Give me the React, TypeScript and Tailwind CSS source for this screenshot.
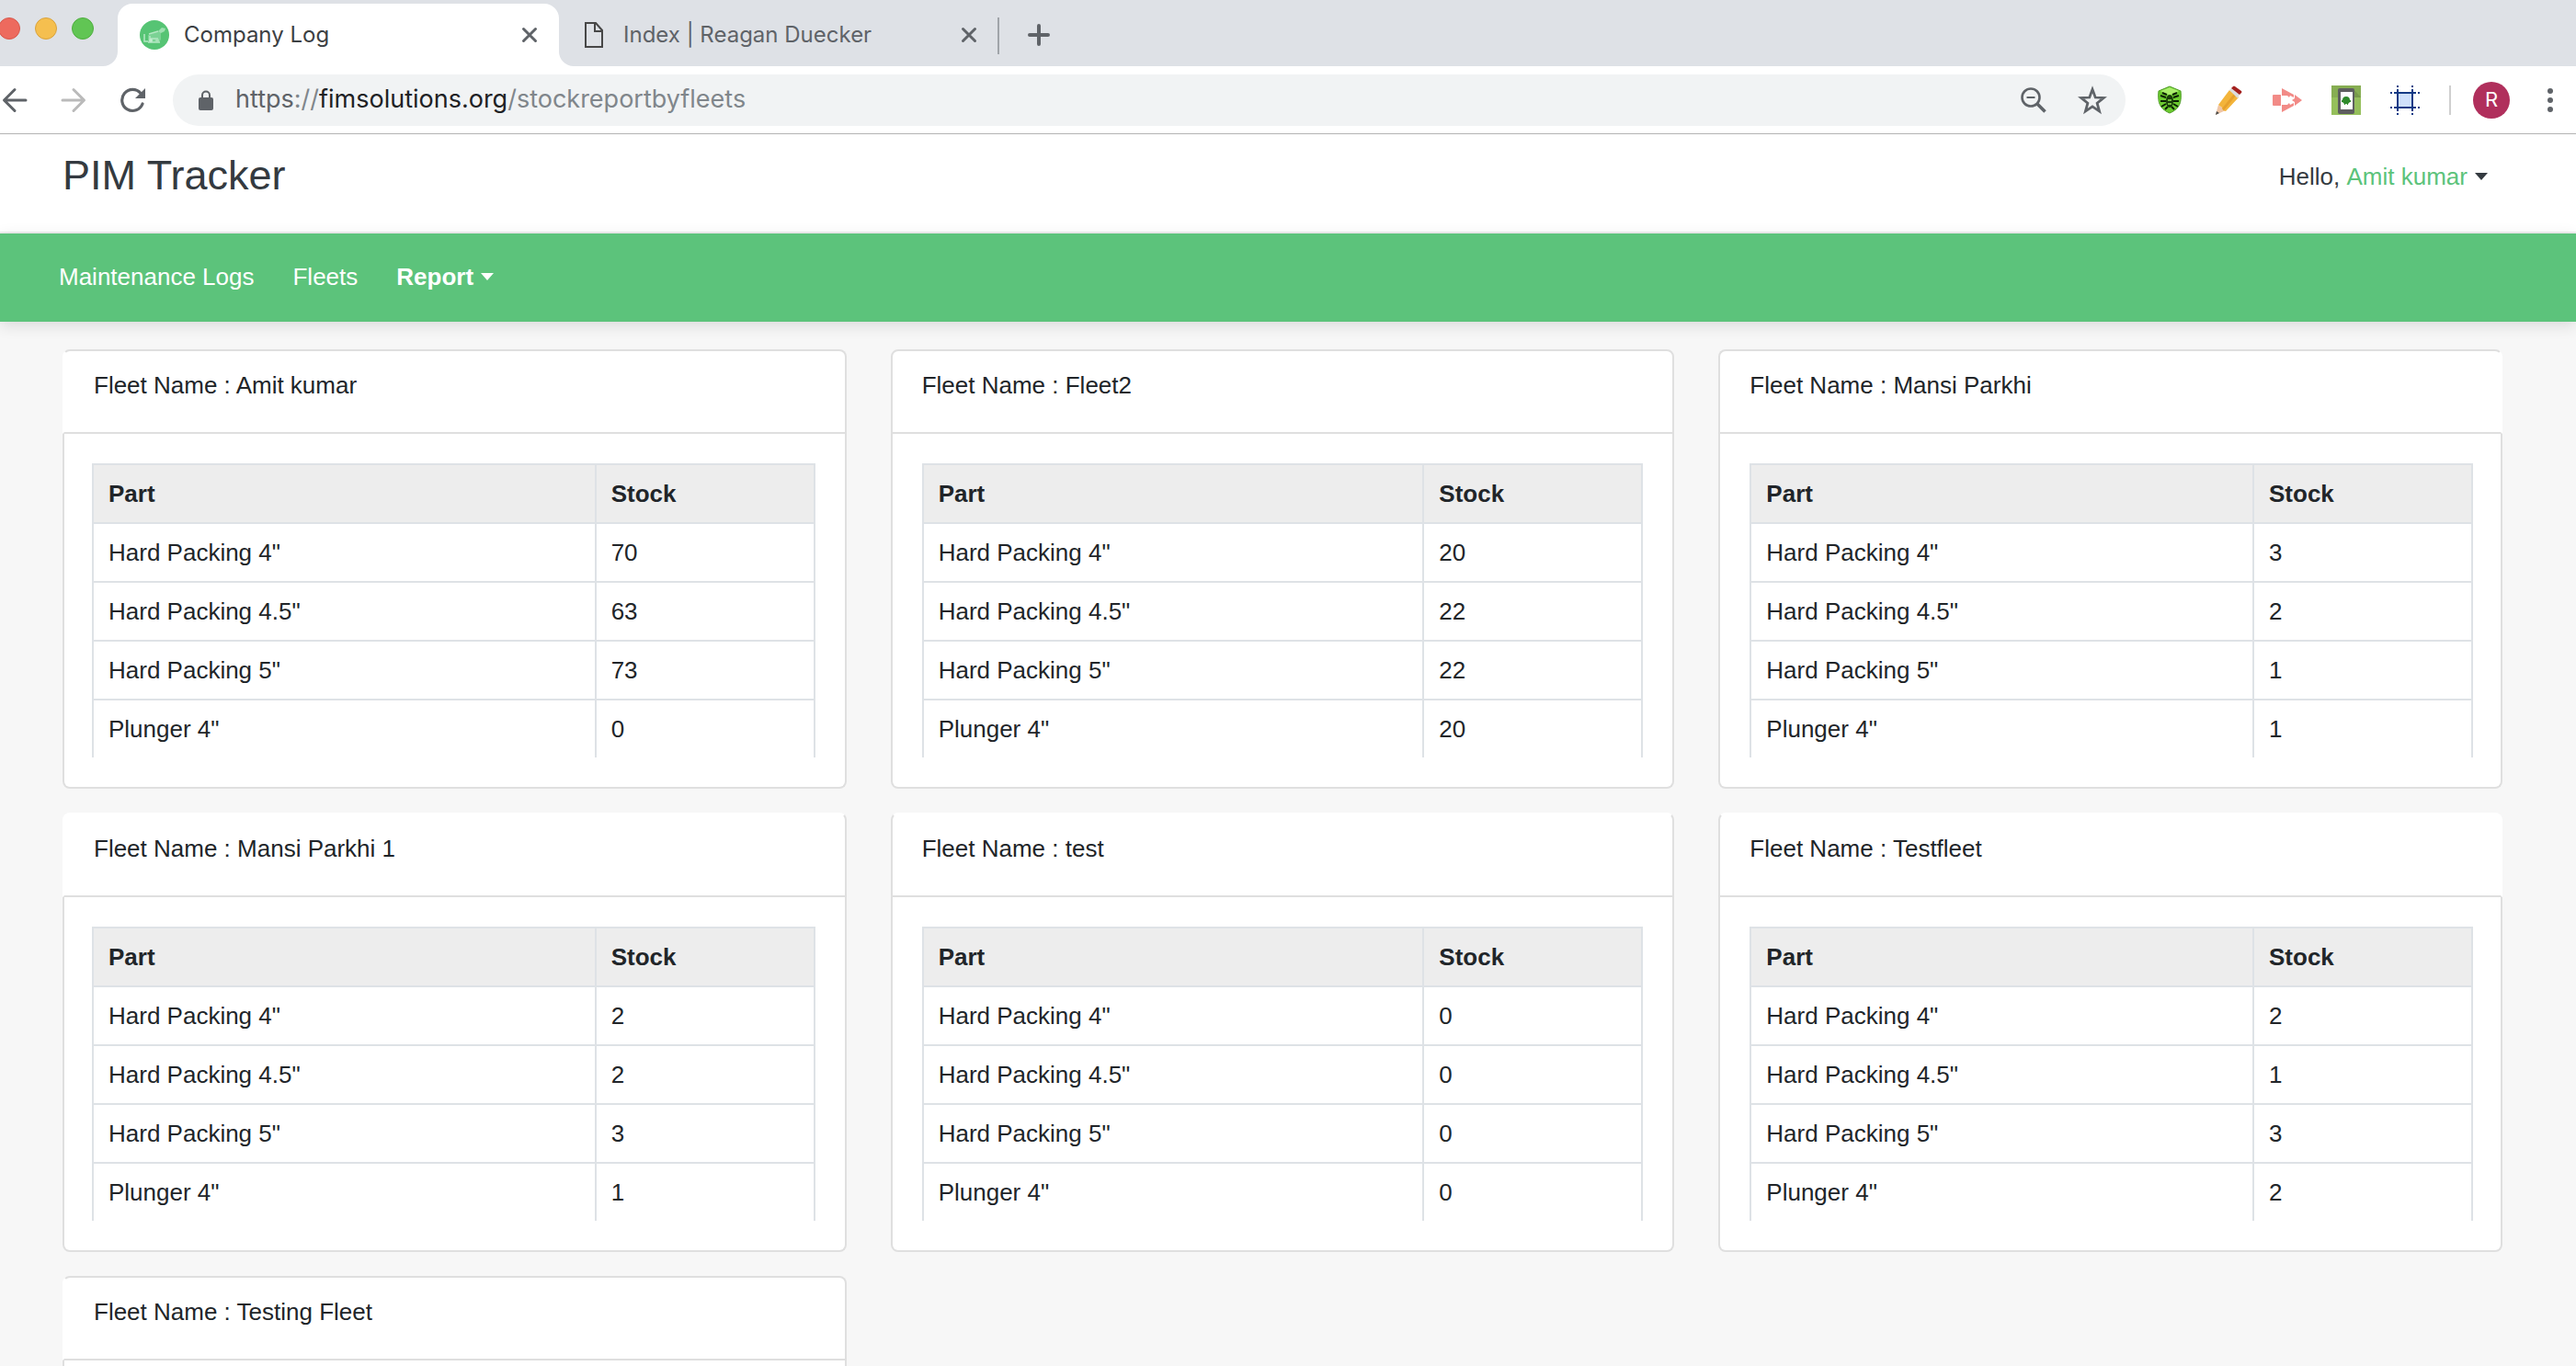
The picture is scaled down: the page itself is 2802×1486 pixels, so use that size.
import React from "react";

type Row = [string, number];
type Fleet = { name: string; rows: Row[] };

const parts = ['Hard Packing 4"', 'Hard Packing 4.5"', 'Hard Packing 5"', 'Plunger 4"'];
const fleet = (name: string, stock: number[]): Fleet => ({
  name,
  rows: stock.map((s, i) => [parts[i], s] as Row),
});

const fleets: Fleet[] = [
  fleet("Amit kumar", [70, 63, 73, 0]),
  fleet("Fleet2", [20, 22, 22, 20]),
  fleet("Mansi Parkhi", [3, 2, 1, 1]),
  fleet("Mansi Parkhi 1", [2, 2, 3, 1]),
  fleet("test", [0, 0, 0, 0]),
  fleet("Testfleet", [2, 1, 3, 2]),
  fleet("Testing Fleet", []),
];

function Close() {
  return (
    <svg viewBox="0 0 20 20" className="size-5" fill="none" stroke="#5f6368" strokeWidth="3" strokeLinecap="round">
      <path d="M3.5 3.5l13 13M16.5 3.5l-13 13" />
    </svg>
  );
}

function TabStrip() {
  return (
    <div className="flex h-[72px] bg-[#dee1e6]">
      <div className="flex w-32 shrink-0 gap-4 pt-[19px]">
        <button aria-label="Close window" className="-ml-0.5 size-6 rounded-full border border-[#d8584c] bg-[#ed6a5e]" />
        <button aria-label="Minimize window" className="size-6 rounded-full border border-[#d9a23b] bg-[#f5bf4f]" />
        <button aria-label="Zoom window" className="size-6 rounded-full border border-[#4fae3f] bg-[#61c554]" />
      </div>
      <div className="relative mt-1 flex w-[480px] shrink-0 items-center rounded-t-2xl bg-white pl-6 pr-[22px]">
        <svg viewBox="0 0 16 16" className="absolute bottom-0 -left-4 size-4">
          <path d="M16 0v16H0A16 16 0 0 0 16 0z" fill="#fff" />
        </svg>
        <svg viewBox="0 0 16 16" className="absolute -right-4 bottom-0 size-4">
          <path d="M0 0v16h16A16 16 0 0 1 0 0z" fill="#fff" />
        </svg>
        <svg viewBox="0 0 32 32" className="size-8">
          <circle cx="16" cy="16" r="16" fill="#56c474" />
          <path d="M9 16l9-3 3-1 2 1v8l-2 3H9z" fill="#7bd294" />
          <path d="M20 12l4-4 4 1-1 3-4 2z" fill="#9fe0b1" />
          <path d="M10 15l10-3M5 15v8h4M9 24h13M11 17v3h9" fill="none" stroke="#b5e8c3" strokeWidth="1.500" />
          <circle cx="12" cy="22" r="2" fill="#c4edcf" />
          <circle cx="19" cy="22" r="2" fill="#a8e3b8" />
        </svg>
        <span className="ml-4 grow text-2xl text-[#3c4043]">Company Log</span>
        <button aria-label="Close tab"><Close /></button>
      </div>
      <div className="flex w-[477px] shrink-0 items-center pl-7 pr-[21px] pt-1">
        <svg viewBox="0 0 20 28" className="h-7 w-5" fill="none" stroke="#474747" strokeWidth="2">
          <path d="M1 1h11l7 8v18H1zM11 1v9h8" />
        </svg>
        <span className="ml-[22px] grow text-2xl text-[#5f6368]">Index | Reagan Duecker</span>
        <button aria-label="Close tab"><Close /></button>
      </div>
      <div className="mt-[19px] h-10 w-0.5 bg-[#a0a4a9]" />
      <button aria-label="New tab" className="ml-[31px] pt-1">
        <svg viewBox="0 0 24 24" className="size-6" stroke="#5f6368" strokeWidth="4" strokeLinecap="round">
          <path d="M12 2v20M2 12h20" />
        </svg>
      </button>
    </div>
  );
}

function Extensions() {
  return (
    <div className="ml-8 flex items-center gap-8">
      <button aria-label="Shield extension">
        <svg viewBox="0 0 32 32" className="size-8">
          <path d="M16 1l12 5c1 11 0 19-12 24C4 25 3 17 4 6z" fill="#6ccb2f" stroke="#4c9b24" />
          <path d="M16 2l10 4-10 5L6 6z" fill="#a9ee6a" />
          <ellipse cx="16" cy="17" rx="4" ry="7" fill="#173d08" />
          <path d="M13 10L8 8M19 10l5-2M12 13l-6-2M20 13l6-2M12 17H6M20 17h6M12 20l-5 3M20 20l5 3M14 23l-3 3M18 23l3 3" stroke="#0c2204" strokeWidth="2" />
          <path d="M14 16h4M14 20h4" stroke="#8fe04a" strokeWidth="1.5" />
        </svg>
      </button>
      <button aria-label="Pencil extension">
        <svg viewBox="0 0 32 32" className="size-8">
          <path d="M2 32l3-11 8 6z" fill="#efc6a6" />
          <path d="M2 32l1-4 3 2z" fill="#4a4a4a" />
          <path d="M5 21L17 5l10 8-14 15-3-1-1-3z" fill="#f3b43a" />
          <path d="M9 25L22 9l2 2-13 16z" fill="#e6a02c" />
          <path d="M17 5l2-2 9 7-2 4z" fill="#dcdcdc" />
          <path d="M19 3l2-2q1-1 2 0l7 5q1 1 0 2l-2 2z" fill="#a3211f" />
        </svg>
      </button>
      <button aria-label="Recorder extension">
        <svg viewBox="0 0 32 32" className="size-8" fill="#f28b87">
          <path d="M1 10h8v12H1q-1 0-1-1V11q0-1 1-1zM10 3l13 7v3l-4-2-1 2-2-2h-6zM10 29l13-7v-3l-4 2-1-2-2 2h-6zM24 10l8 6-8 6v-4l-3-2 3-2z" />
        </svg>
      </button>
      <button aria-label="Device extension">
        <svg viewBox="0 0 32 32" className="size-8">
          <path d="M0 0h32v32H0z" fill="#95bf5b" />
          <path d="M0 0h32v13H0z" fill="#86ad52" />
          <path d="M24 4l8 9H24z" fill="#77994a" />
          <rect x="7" y="3" width="18" height="28" rx="2" fill="#5e5e60" />
          <path d="M10 7h13v19H10z" fill="#fff" />
          <path d="M12 16q0-4 4-4t4 4h1v2h-1l-2 2v1h-1v-1h-2v1h-1v-1l-2-2h-1v-2z" fill="#2f8a2b" />
        </svg>
      </button>
      <button aria-label="Grid extension">
        <svg viewBox="0 0 32 32" className="size-8" stroke="#143a85" strokeWidth="2" fill="none">
          <path d="M8 8h16v16H8z" fill="#cfe0fb" />
          <path d="M4 8h24M4 24h24M8 4v24M24 4v24" />
          <path d="M0 8h2M30 8h2M0 24h2M30 24h2M8 0v2M24 0v2M8 30v2M24 30v2" />
        </svg>
      </button>
    </div>
  );
}

function Toolbar() {
  return (
    <div className="flex h-[74px] items-center border-b border-[#b3b3b3] bg-white pr-[14px]">
      <button aria-label="Back" className="ml-0.5">
        <svg viewBox="0 0 28 28" className="size-7" fill="none" stroke="#5f6368" strokeWidth="3" strokeLinecap="round" strokeLinejoin="round">
          <path d="M26 14H3M14 2.500L2.500 14 14 25.500" />
        </svg>
      </button>
      <button aria-label="Forward" className="ml-9">
        <svg viewBox="0 0 28 28" className="size-7" fill="none" stroke="#bababa" strokeWidth="3" strokeLinecap="round" strokeLinejoin="round">
          <path d="M2 14h23M14 2.500L25.500 14 14 25.500" />
        </svg>
      </button>
      <button aria-label="Reload" className="ml-9">
        <svg viewBox="0 0 28 28" className="size-7" fill="none" stroke="#5f6368" strokeWidth="3.200" strokeLinecap="round">
          <path d="M23 6.500A11.500 11.500 0 1 0 25 18" />
          <path d="M28 1v11H17z" fill="#5f6368" stroke="none" />
        </svg>
      </button>
      <div className="ml-[30px] flex h-14 grow items-center rounded-full bg-[#f1f3f4] pl-7 pr-5">
        <svg viewBox="0 0 16 22" className="mr-6 h-[22px] w-4">
          <rect y="8" width="16" height="14" rx="2" fill="#5f6368" />
          <path d="M4 9V5.500a4 4 0 0 1 8 0V9" fill="none" stroke="#5f6368" strokeWidth="2" />
        </svg>
        <span className="grow text-[27px] text-[#80868b]">
          <span className="text-[#5f6368]">https</span>://<span className="text-[#202124]">fimsolutions.org</span>/stockreportbyfleets
        </span>
        <button aria-label="Zoom out">
          <svg viewBox="0 0 28 28" className="size-7" fill="none" stroke="#5f6368" strokeWidth="2.600">
            <circle cx="11" cy="11" r="9.500" />
            <path d="M18 18l8.500 8.500" strokeWidth="3.500" />
            <path d="M6.500 11h9" strokeWidth="2" />
          </svg>
        </button>
        <button aria-label="Bookmark" className="ml-[34px]">
          <svg viewBox="0 0 30 30" className="size-8" fill="none" stroke="#5f6368" strokeWidth="2.600">
            <path d="M15 4l3 8.200 8.500.4-6.700 5.400 2.300 8.300L15 21.500l-7.100 4.800L10.200 18 3.500 12.600l8.500-.4z" />
          </svg>
        </button>
      </div>
      <Extensions />
      <div className="ml-8 h-8 w-0.5 bg-[#cfcfcf]" />
      <button className="ml-6 size-10 rounded-full bg-[#b02f5c] text-[22px] text-white">R</button>
      <button aria-label="Menu" className="ml-[30px]">
        <svg viewBox="0 0 28 28" className="size-7" fill="#5f6368">
          <circle cx="14" cy="4" r="3" /><circle cx="14" cy="14" r="3" /><circle cx="14" cy="24" r="3" />
        </svg>
      </button>
    </div>
  );
}

function Caret() {
  return (
    <svg viewBox="0 0 14 8" className="mb-1 ml-2 inline-block h-2 w-3.5" fill="currentColor">
      <path d="M0 0h14L7 8z" />
    </svg>
  );
}

function Card({ fleet, index }: { fleet: Fleet; index: number }) {
  const isFirst = index % 3 === 0;
  const isLast = index % 3 === 2;
  const top = index > 2 && index < 6 ? "border-t-white" : "";
  return (
    <section className="flex flex-col">
      <h2 className={`h-[92px] rounded-t-lg border-2 border-[#dfdfdf] bg-white px-8 pt-[17px] leading-10 ${isFirst ? "border-l-white" : ""} ${isLast ? "border-r-white" : ""} ${top}`}>
        Fleet Name : {fleet.name}
      </h2>
      <div className={`rounded-b-lg border-2 border-t-0 border-[#dfdfdf] bg-white py-8 ${isFirst ? "pl-[30px]" : "pl-8"} ${isLast ? "pr-[30px]" : "pr-8"}`}>
        {fleet.rows.length > 0 && (
          <table className="w-full table-fixed border-separate border-spacing-0 border-l-2 border-[#dee2e6] text-left">
            <thead className="bg-[#ededed]">
              <tr>
                <th className="h-16 border-t-2 border-r-2 border-[#dee2e6] px-4 font-bold">Part</th>
                <th className="h-16 w-[238px] border-t-2 border-r-2 border-[#dee2e6] px-4 font-bold">Stock</th>
              </tr>
            </thead>
            <tbody>
              {fleet.rows.map(([part, stock]) => (
                <tr key={part}>
                  <td className="h-16 border-t-2 border-r-2 border-[#dee2e6] px-4">{part}</td>
                  <td className="h-16 border-t-2 border-r-2 border-[#dee2e6] px-4">{stock}</td>
                </tr>
              ))}
            </tbody>
          </table>
        )}
      </div>
    </section>
  );
}

export default function App() {
  return (
    <div className="h-screen overflow-hidden bg-[#f7f7f7] font-['Liberation_Sans',Arial,sans-serif] text-[26px] text-[#212529]">
      <div className="font-[Inter,Roboto,sans-serif]">
        <TabStrip />
        <Toolbar />
      </div>
      <header className="flex h-[108px] items-start justify-between border-b-2 border-[#eeeeee] bg-white pl-[68px] pr-24">
        <h1 className="pt-[18px] text-[45px] leading-[54px] text-[#343a40]">PIM Tracker</h1>
        <div className="pt-[26px] leading-10 text-[#343a40]">
          Hello, <button><span className="text-[#5cc37b]">Amit kumar</span><Caret /></button>
        </div>
      </header>
      <nav className="relative flex h-24 items-center gap-[42px] bg-[#5cc37b] pb-0.5 pl-16 text-white shadow-[0_4px_16px_rgba(0,0,0,0.12)]">
        <a href="#logs">Maintenance Logs</a>
        <a href="#fleets">Fleets</a>
        <button className="font-bold">Report<Caret /></button>
      </nav>
      <main className="grid grid-cols-3 gap-x-12 gap-y-[26px] pl-[68px] pr-20 pt-[30px]">
        {fleets.map((f, i) => (
          <Card key={f.name} fleet={f} index={i} />
        ))}
      </main>
    </div>
  );
}
